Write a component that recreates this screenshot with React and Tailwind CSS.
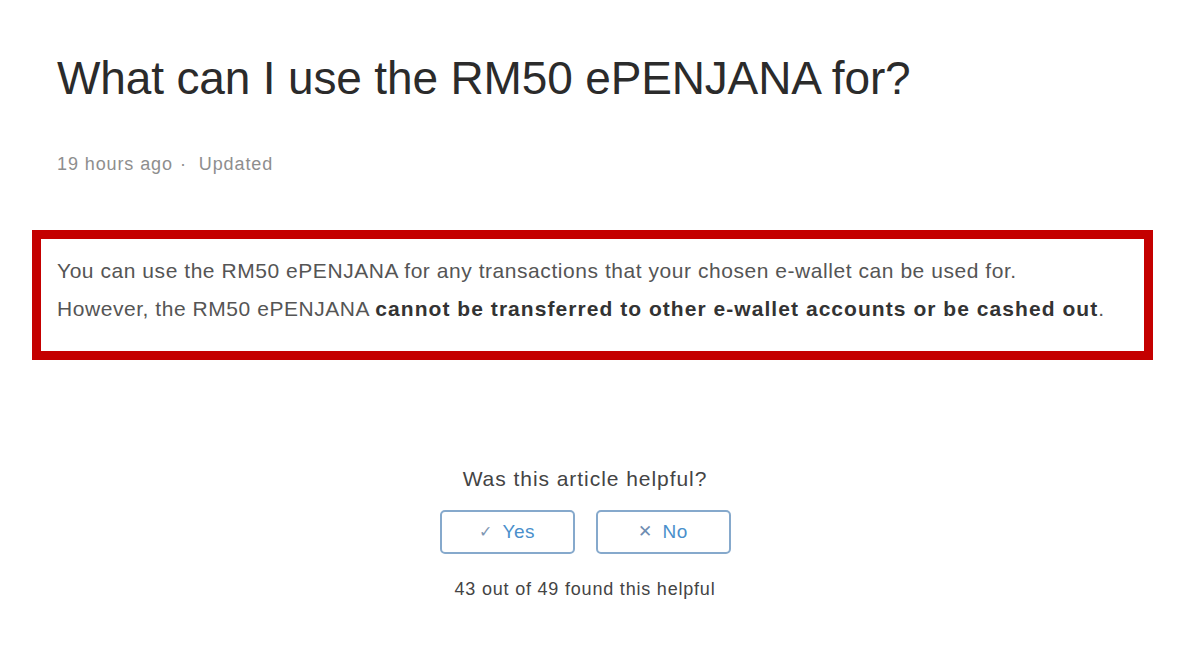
import React from "react";

export default function App() {
  return (
    <div className="w-[1200px] h-[668px] bg-white overflow-hidden" style={{ fontFamily: '"Liberation Sans", Arial, sans-serif' }}>
      <div className="pl-[57px] pt-[51px]">
        <h1 className="text-[46px] leading-[54px] text-[#2b2b2b] font-normal tracking-[-0.15px]">
          What can I use the RM50 ePENJANA for?
        </h1>
        <div className="mt-[48px] text-[18px] leading-[22px] text-[#8e8e8e] tracking-[0.9px] flex items-center">
          <span>19 hours ago</span>
          <span className="ml-[7px] mr-[12px]">·</span>
          <span>Updated</span>
        </div>
      </div>
      <div className="ml-[32px] mt-[55px] w-[1121px] h-[130px] border-[9px] border-[#c40000] pl-[16px] pt-[13px]">
        <p className="text-[21px] leading-[38px] text-[#555555] tracking-[0.55px]">
          You can use the RM50 ePENJANA for any transactions that your chosen e-wallet can be used for.
          <br />
          However, the RM50 ePENJANA{" "}
          <span className="font-bold text-[#333333] tracking-[1.05px]">cannot be transferred to other e-wallet accounts or be cashed out</span>.
        </p>
      </div>
      <div className="flex flex-col items-center mt-[106px] pr-[30px]">
        <div className="text-[21px] leading-[26px] text-[#444444] tracking-[0.95px]">Was this article helpful?</div>
        <div className="flex gap-[21px] mt-[18px]">
          <button className="w-[135px] h-[44px] border-2 border-[#86a9cc] rounded-[5px] text-[#4a8fcb] text-[19px] tracking-[0.5px] flex items-center justify-center gap-[10px]">
            <span className="text-[#7f97b3] text-[16px]">✓</span>
            <span>Yes</span>
          </button>
          <button className="w-[135px] h-[44px] border-2 border-[#86a9cc] rounded-[5px] text-[#4a8fcb] text-[19px] tracking-[0.5px] flex items-center justify-center gap-[10px]">
            <span className="text-[#6f8db2] text-[17px]">✕</span>
            <span>No</span>
          </button>
        </div>
        <div className="mt-[24px] text-[18px] leading-[22px] text-[#444444] tracking-[0.8px]">43 out of 49 found this helpful</div>
      </div>
    </div>
  );
}
